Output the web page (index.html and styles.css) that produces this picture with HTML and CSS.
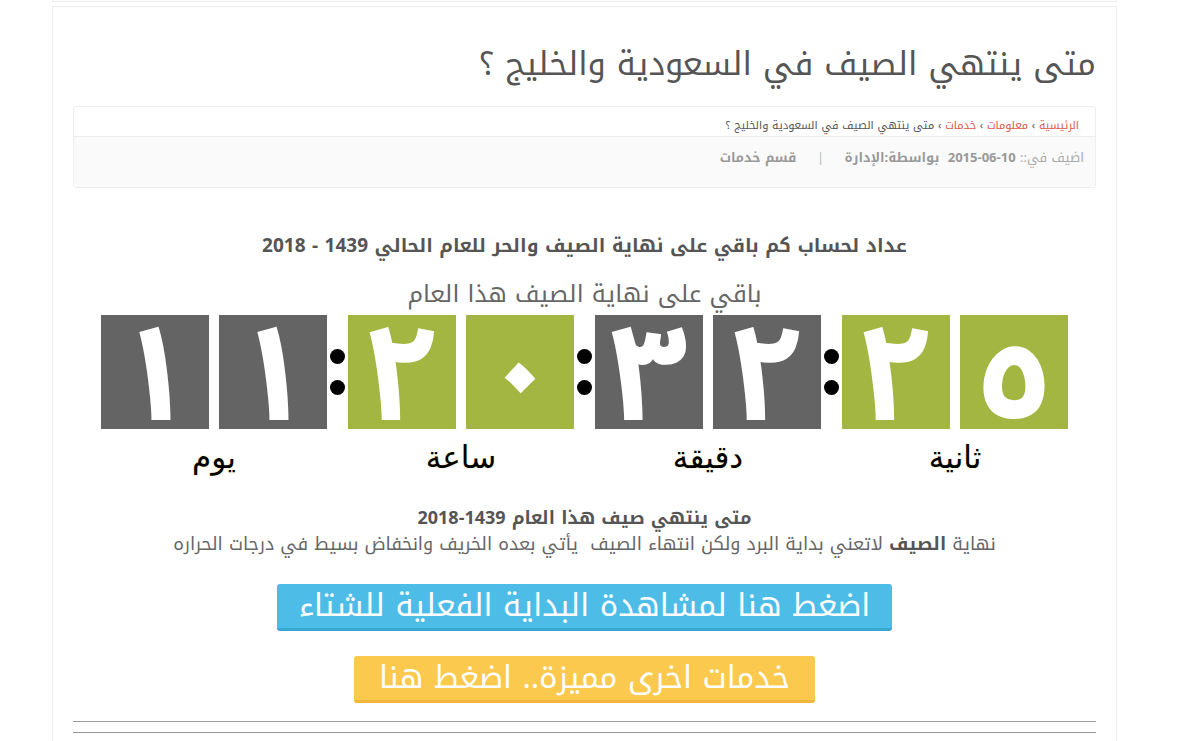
FILE: index.html
```html
<!DOCTYPE html>
<html lang="ar" dir="rtl">
<head>
  <meta charset="UTF-8">
  <meta name="viewport" content="width=device-width, initial-scale=1.0">
  <title>متى ينتهي الصيف في السعودية والخليج ؟</title>
  <link rel="stylesheet" href="styles.css">
</head>
<body>
  <div class="prev-box"></div>
  <div class="container">
    <h1 class="post-title">متى ينتهي الصيف في السعودية والخليج ؟</h1>

    <div class="post-info">
      <div class="crumbs">
        <a href="#">الرئيسية</a> › <a href="#">معلومات</a> › <a href="#">خدمات</a> › متى ينتهي الصيف في السعودية والخليج ؟
      </div>
      <div class="meta">
        <span class="light">اضيف في::</span>
        <b class="date">2015-06-10</b>
        <b>بواسطة:الإدارة</b>
        <span class="sep">|</span>
        <b>قسم خدمات</b>
      </div>
    </div>

    <div class="post-body">
      <h3 class="counter-title">عداد لحساب كم باقي على نهاية الصيف والحر للعام الحالي 1439 - 2018</h3>
      <p class="counter-sub">باقي على نهاية الصيف هذا العام</p>

      <div class="countdown">
        <div class="unit">
          <div class="digits">
            <span class="digit gray">١</span>
            <span class="digit gray">١</span>
          </div>
          <div class="label">يوم</div>
        </div>
        <div class="colon"><i></i><i></i></div>
        <div class="unit">
          <div class="digits">
            <span class="digit green">٢</span>
            <span class="digit green">٠</span>
          </div>
          <div class="label">ساعة</div>
        </div>
        <div class="colon"><i></i><i></i></div>
        <div class="unit">
          <div class="digits">
            <span class="digit gray">٣</span>
            <span class="digit gray">٢</span>
          </div>
          <div class="label">دقيقة</div>
        </div>
        <div class="colon"><i></i><i></i></div>
        <div class="unit">
          <div class="digits">
            <span class="digit green">٢</span>
            <span class="digit green">٥</span>
          </div>
          <div class="label">ثانية</div>
        </div>
      </div>

      <h4 class="end-title">متى ينتهي صيف هذا العام 1439-2018</h4>
      <p class="end-text">نهاية <b>الصيف</b> لاتعني بداية البرد ولكن انتهاء الصيف &nbsp;يأتي بعده الخريف وانخفاض بسيط في درجات الحراره</p>

      <div class="btn-row">
        <a href="#" class="btn btn-blue">اضغط هنا لمشاهدة البداية الفعلية للشتاء</a>
      </div>
      <div class="btn-row">
        <a href="#" class="btn btn-yellow">خدمات اخرى مميزة.. اضغط هنا</a>
      </div>

      <hr>
      <hr>
    </div>
  </div>
</body>
</html>
```

FILE: styles.css
```css
body {
  font-family: 'Noto Kufi Arabic', 'Noto Sans Arabic', 'Noto Sans', 'DejaVu Sans', sans-serif;
  margin: 0;
  padding: 0;
  background: #fff;
  color: #555;
}
.prev-box {
  width: 1065px;
  height: 2px;
  margin-right: 60px;
  border: 1px solid #eee;
  border-top: none;
  box-sizing: border-box;
}
.container {
  width: 1065px;
  margin: 4px 60px 0 0;
  border: 1px solid #eee;
  box-sizing: border-box;
  padding: 0 20px;
  height: 760px;
}
.post-title {
  font-size: 32.5px;
  font-weight: normal;
  color: #555;
  margin: 33px 0 18px;
  line-height: 48px;
}
.post-info {
  border: 1px solid #eee;
  border-radius: 3px;
}
.crumbs {
  height: 29px;
  line-height: 38px;
  font-size: 11px;
  color: #555;
  padding-right: 16px;
}
.crumbs a {
  color: #e0584a;
  text-decoration: none;
}
.meta {
  background: #fafafa;
  border-top: 1px solid #eee;
  height: 50px;
  line-height: 42px;
  padding-right: 11px;
  font-size: 13px;
  color: #999;
}
.meta .light {
  color: #aaa;
  font-weight: normal;
}
.meta b {
  margin-left: 4px;
}
.meta .date {
  direction: ltr;
  unicode-bidi: isolate;
}
.meta .sep {
  margin: 0 12px 0 16px;
  color: #bbb;
}
.post-body {
  text-align: center;
}
.counter-title {
  font-size: 19px;
  font-weight: bold;
  color: #555;
  margin: 46px 0 0;
  line-height: 24px;
}
.counter-sub {
  font-size: 24px;
  color: #666;
  margin: 21px 0 0;
  line-height: 30px;
}
.countdown {
  direction: ltr;
  display: flex;
  justify-content: center;
  margin-top: 6px;
}
.digits {
  display: flex;
  gap: 10px;
}
.digit {
  width: 108px;
  height: 114px;
  padding-top: 8px;
  box-sizing: border-box;
  color: #fff;
  font-family: 'Noto Sans Arabic', 'DejaVu Sans', sans-serif;
  font-weight: bold;
  font-size: 136px;
  line-height: 106px;
  text-align: center;
}
.gray {
  background: #646464;
}
.green {
  background: #a2b641;
}
.label {
  font-family: 'DejaVu Sans', sans-serif;
  font-size: 31px;
  color: #000;
  text-shadow: 0 0 2px #e6e6a0;
  margin-top: 10px;
  line-height: 36px;
}
.colon {
  width: 21px;
  height: 114px;
  display: flex;
  flex-direction: column;
  align-items: center;
  justify-content: center;
  gap: 16px;
}
.colon i {
  width: 15px;
  height: 15px;
  border-radius: 50%;
  background: #000;
}
.end-title {
  font-size: 18px;
  font-weight: bold;
  color: #555;
  margin: 31px 0 0;
  line-height: 24px;
}
.end-text {
  font-size: 18px;
  color: #666;
  margin: 2px 0 0;
  line-height: 24px;
}
.end-text b {
  color: #555;
}
.btn-row {
  margin-top: 28px;
}
.btn-row + .btn-row {
  margin-top: 25px;
}
.btn {
  display: inline-block;
  color: #fff;
  font-size: 31px;
  line-height: 44px;
  border-radius: 3px;
  text-decoration: none;
}
.btn-blue {
  padding: 0 22px;
  background: #4dbde8;
  border-bottom: 3px solid #3aa6d4;
}
.btn-yellow {
  padding: 0 25px;
  background: #fcc94f;
  border-bottom: 3px solid #f1b73a;
}
hr {
  border: none;
  border-top: 1px solid #999;
  margin: 0;
}
hr:first-of-type {
  margin-top: 18px;
}
hr + hr {
  margin-top: 10px;
}
```
